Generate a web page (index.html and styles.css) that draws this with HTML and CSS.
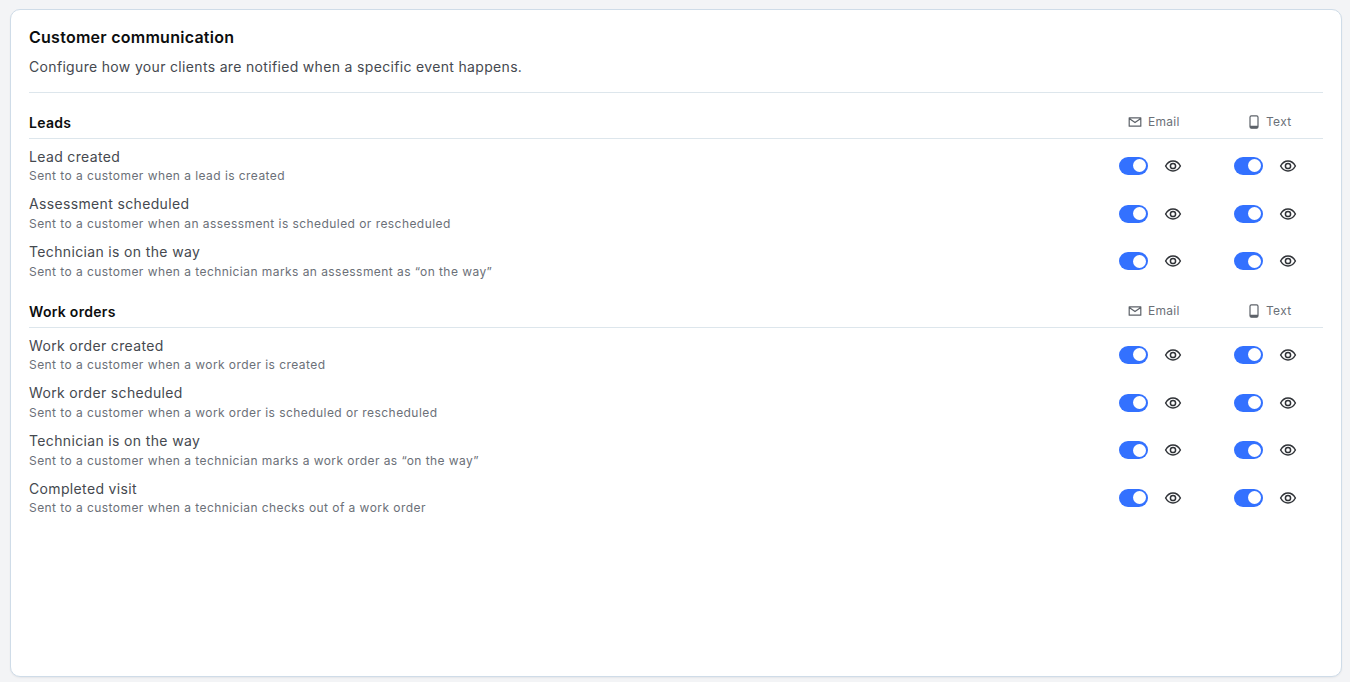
FILE: index.html
```html
<!DOCTYPE html>
<html lang="en">
<head>
<meta charset="utf-8">
<title>Customer communication</title>
<link rel="stylesheet" href="styles.css">
</head>
<body>
<svg class="defs" width="0" height="0" aria-hidden="true">
  <symbol id="i-mail" viewBox="0 0 14 14"><path d="M1.200 2.800h11.600v8.400H1.200zM1.200 3.400 7 7.600l5.800-4.200" fill="none" stroke="currentColor" stroke-width="1.200" stroke-linejoin="round"/></symbol>
  <symbol id="i-phone" viewBox="0 0 14 14"><rect x="3" y=".8" width="8" height="12.400" rx="1.400" fill="none" stroke="currentColor" stroke-width="1.200"/><path d="M3 10.800h8v1.200a1.200 1.200 0 0 1-1.200 1.200H4.200A1.200 1.200 0 0 1 3 12z" fill="currentColor"/></symbol>
  <symbol id="i-eye" viewBox="0 0 18 14"><path d="M1.600 7c1.900-3.400 4.400-5 7.400-5s5.500 1.600 7.400 5c-1.900 3.400-4.400 5-7.400 5s-5.500-1.600-7.400-5z" fill="none" stroke="currentColor" stroke-width="1.500" stroke-linejoin="round"/><circle cx="9" cy="7" r="2.600" fill="none" stroke="currentColor" stroke-width="1.500"/></symbol>
</svg>
<main class="card">
  <h1 class="title">Customer communication</h1>
  <p class="subtitle">Configure how your clients are notified when a specific event happens.</p>

  <section class="group first">
    <header class="group-head">
      <h2 class="group-title">Leads</h2>
      <div class="channels">
        <span class="channel email"><svg class="ci"><use href="#i-mail"/></svg>Email</span>
        <span class="channel text"><svg class="ci"><use href="#i-phone"/></svg>Text</span>
      </div>
    </header>
    <div class="row">
      <div class="info"><div class="name">Lead created</div><div class="desc">Sent to a customer when a lead is created</div></div>
      <div class="controls"><div class="ctl"><span class="toggle"></span><svg class="eye"><use href="#i-eye"/></svg></div><div class="ctl"><span class="toggle"></span><svg class="eye"><use href="#i-eye"/></svg></div></div>
    </div>
    <div class="row">
      <div class="info"><div class="name">Assessment scheduled</div><div class="desc">Sent to a customer when an assessment is scheduled or rescheduled</div></div>
      <div class="controls"><div class="ctl"><span class="toggle"></span><svg class="eye"><use href="#i-eye"/></svg></div><div class="ctl"><span class="toggle"></span><svg class="eye"><use href="#i-eye"/></svg></div></div>
    </div>
    <div class="row">
      <div class="info"><div class="name">Technician is on the way</div><div class="desc">Sent to a customer when a technician marks an assessment as “on the way”</div></div>
      <div class="controls"><div class="ctl"><span class="toggle"></span><svg class="eye"><use href="#i-eye"/></svg></div><div class="ctl"><span class="toggle"></span><svg class="eye"><use href="#i-eye"/></svg></div></div>
    </div>
  </section>

  <section class="group">
    <header class="group-head">
      <h2 class="group-title">Work orders</h2>
      <div class="channels">
        <span class="channel email"><svg class="ci"><use href="#i-mail"/></svg>Email</span>
        <span class="channel text"><svg class="ci"><use href="#i-phone"/></svg>Text</span>
      </div>
    </header>
    <div class="row">
      <div class="info"><div class="name">Work order created</div><div class="desc">Sent to a customer when a work order is created</div></div>
      <div class="controls"><div class="ctl"><span class="toggle"></span><svg class="eye"><use href="#i-eye"/></svg></div><div class="ctl"><span class="toggle"></span><svg class="eye"><use href="#i-eye"/></svg></div></div>
    </div>
    <div class="row">
      <div class="info"><div class="name">Work order scheduled</div><div class="desc">Sent to a customer when a work order is scheduled or rescheduled</div></div>
      <div class="controls"><div class="ctl"><span class="toggle"></span><svg class="eye"><use href="#i-eye"/></svg></div><div class="ctl"><span class="toggle"></span><svg class="eye"><use href="#i-eye"/></svg></div></div>
    </div>
    <div class="row">
      <div class="info"><div class="name">Technician is on the way</div><div class="desc">Sent to a customer when a technician marks a work order as “on the way”</div></div>
      <div class="controls"><div class="ctl"><span class="toggle"></span><svg class="eye"><use href="#i-eye"/></svg></div><div class="ctl"><span class="toggle"></span><svg class="eye"><use href="#i-eye"/></svg></div></div>
    </div>
    <div class="row">
      <div class="info"><div class="name">Completed visit</div><div class="desc">Sent to a customer when a technician checks out of a work order</div></div>
      <div class="controls"><div class="ctl"><span class="toggle"></span><svg class="eye"><use href="#i-eye"/></svg></div><div class="ctl"><span class="toggle"></span><svg class="eye"><use href="#i-eye"/></svg></div></div>
    </div>
  </section>
</main>
</body>
</html>
```
FILE: styles.css
```css
* { box-sizing: border-box; }
html, body { height: 100%; }
body {
  margin: 0;
  padding: 9px 8px 5px 10px;
  background: #f3f4f6;
  font-family: Inter, "Noto Sans", sans-serif;
  overflow: hidden;
}
.defs { position: absolute; }
.card {
  height: 668px;
  background: #fff;
  border: 1px solid #cfdce8;
  border-radius: 10px;
  padding: 16px 18px;
  box-shadow: 0 1px 2px rgba(16, 24, 40, .06);
}
.title {
  margin: 0;
  font-size: 16px;
  line-height: 22px;
  font-weight: 600;
  letter-spacing: .26px;
  color: #0c0d0e;
}
.subtitle {
  margin: 8px 0 0;
  padding-bottom: 14px;
  border-bottom: 1px solid #dde6ec;
  font-size: 14px;
  line-height: 22px;
  letter-spacing: .33px;
  color: #45494f;
}
.group { margin-top: 7px; }
.group.first { margin-top: 0; }
.group-head {
  display: flex;
  justify-content: space-between;
  align-items: center;
  height: 46px;
  padding-top: 15px;
  border-bottom: 1px solid #dde6ec;
  margin-bottom: 3px;
}
.group + .group .group-head { height: 36px; padding-top: 5px; }
.group-title {
  margin: 0;
  font-size: 14px;
  line-height: 20px;
  font-weight: 600;
  letter-spacing: .3px;
  color: #0c0d0e;
}
.channels, .controls {
  display: grid;
  grid-template-columns: 115px 89px;
}
.channels { margin-top: -3px; }
.channel {
  display: flex;
  align-items: center;
  gap: 6px;
  font-size: 12px;
  line-height: 16px;
  letter-spacing: .3px;
  color: #6b7078;
}
.channel.email { padding-left: 9px; }
.channel.text { padding-left: 13px; gap: 5px; }
.ci { width: 14px; height: 14px; color: #5d6269; flex: none; }
.row {
  display: flex;
  justify-content: space-between;
  align-items: center;
  height: 47.68px;
}
.info { margin-top: -.8px; }
.name {
  font-size: 14px;
  line-height: 19.4px;
  letter-spacing: .35px;
  color: #45494f;
}
.desc {
  margin-top: 1.2px;
  font-size: 12px;
  line-height: 17px;
  letter-spacing: .44px;
  color: #6b7078;
}
.ctl { display: flex; align-items: center; gap: 16px; }
.toggle {
  position: relative;
  width: 29px;
  height: 18px;
  border-radius: 9px;
  background: #3371ff;
}
.toggle::after {
  content: "";
  position: absolute;
  top: 2.500px;
  right: 2.500px;
  width: 13px;
  height: 13px;
  border-radius: 50%;
  background: #fff;
}
.eye { width: 18px; height: 14px; color: #2f3237; }
```
